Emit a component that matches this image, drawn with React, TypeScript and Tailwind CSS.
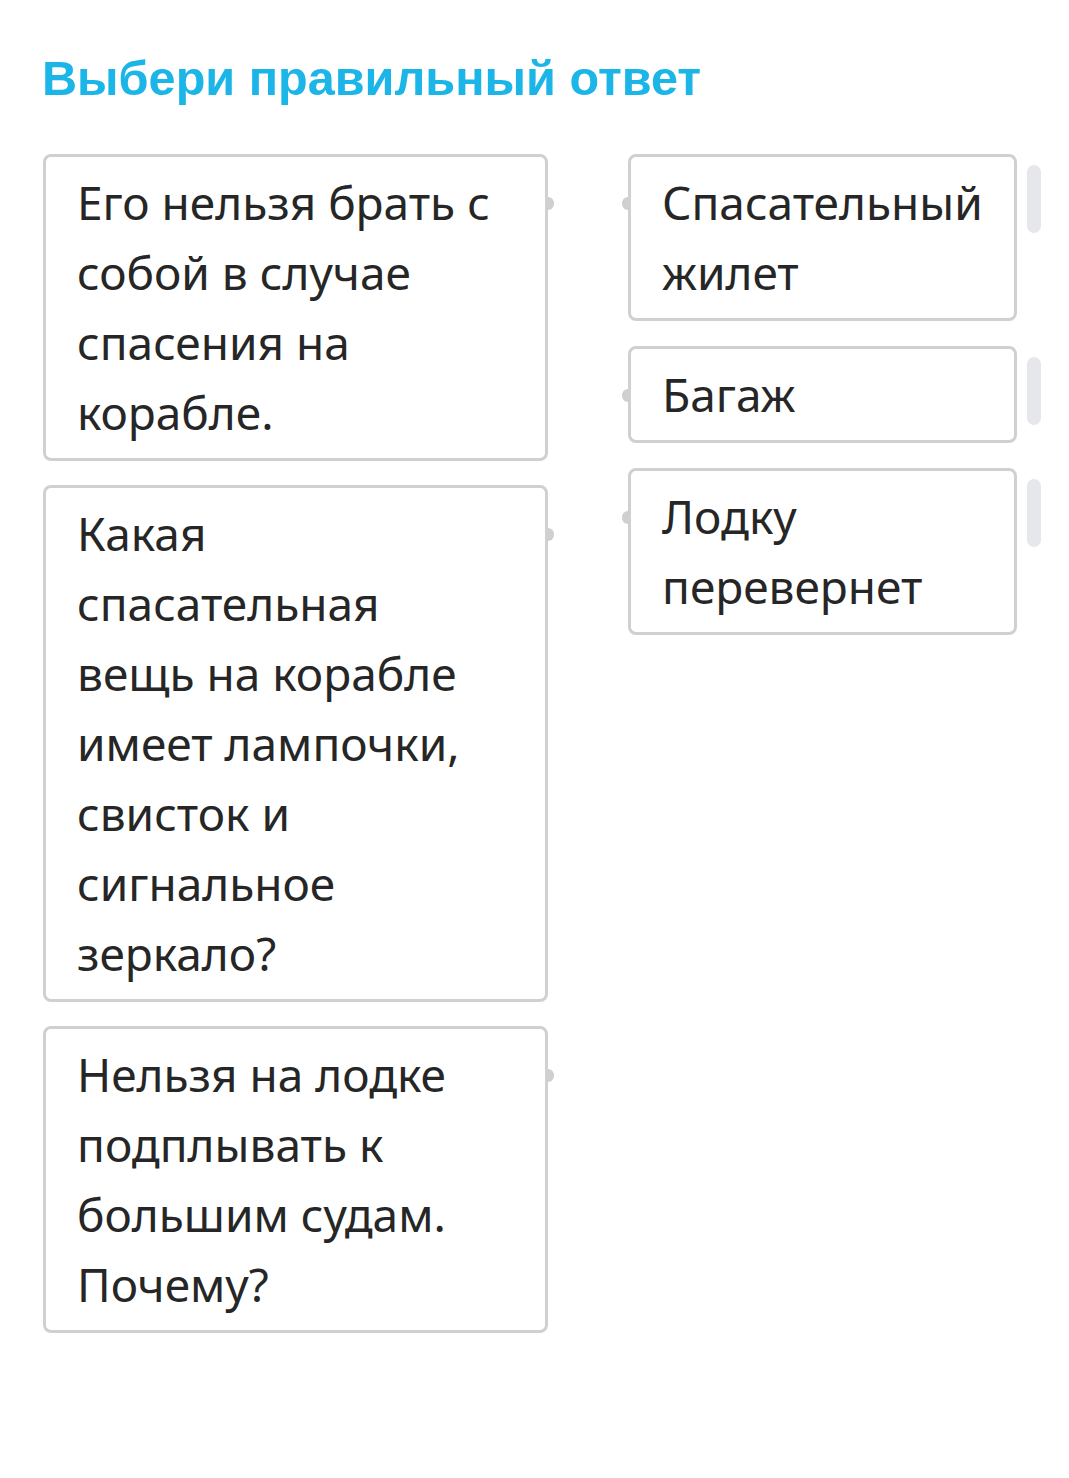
import React from 'react';

const questions: string[][] = [
  ['Его нельзя брать с', 'собой в случае', 'спасения на', 'корабле.'],
  ['Какая', 'спасательная', 'вещь на корабле', 'имеет лампочки,', 'свисток и', 'сигнальное', 'зеркало?'],
  ['Нельзя на лодке', 'подплывать к', 'большим судам.', 'Почему?'],
];

const answers: string[][] = [['Спасательный', 'жилет'], ['Багаж'], ['Лодку', 'перевернет']];

const Lines: React.FC<{ lines: string[] }> = ({ lines }) => (
  <div className="text-[46px] leading-[70px] text-[#262626]">
    {lines.map((l) => (
      <div key={l} className="whitespace-nowrap">{l}</div>
    ))}
  </div>
);

export default function App() {
  return (
    <div className="min-h-[1478px] bg-white pl-[43px] pt-[54px]" style={{ fontFamily: '"Noto Sans", sans-serif' }}>
      <h1
        className="-ml-[1px] text-[48.6px] font-bold leading-none text-[#1cb5e8]"
        style={{ fontFamily: '"Liberation Sans", Arial, sans-serif' }}
      >
        Выбери правильный ответ
      </h1>

      <div className="mt-[51px] flex items-start gap-[80px]">
        <div className="flex w-[505px] flex-col gap-[24px]">
          {questions.map((q, i) => (
            <div key={i} className="relative rounded-[8px] border-[3px] border-[#d0d0d0] bg-white px-[31px] pb-[11px] pt-[10px]">
              <Lines lines={q} />
              <span className="absolute right-[-9px] top-[40px] h-[13px] w-[6px] rounded-r-full bg-[#cfcfcf]" />
            </div>
          ))}
        </div>

        <div className="flex flex-col gap-[25px]">
          {answers.map((a, i) => (
            <div key={i} className="flex items-start gap-[10px]">
              <div className="relative w-[389px] rounded-[8px] border-[3px] border-[#d0d0d0] bg-white px-[31px] pb-[11px] pt-[10px]">
                <Lines lines={a} />
                <span className="absolute left-[-9px] top-[40px] h-[13px] w-[6px] rounded-l-full bg-[#cfcfcf]" />
              </div>
              <div className="mt-[11px] h-[68px] w-[14px] rounded-full bg-[#e6e7ea]" />
            </div>
          ))}
        </div>
      </div>
    </div>
  );
}
